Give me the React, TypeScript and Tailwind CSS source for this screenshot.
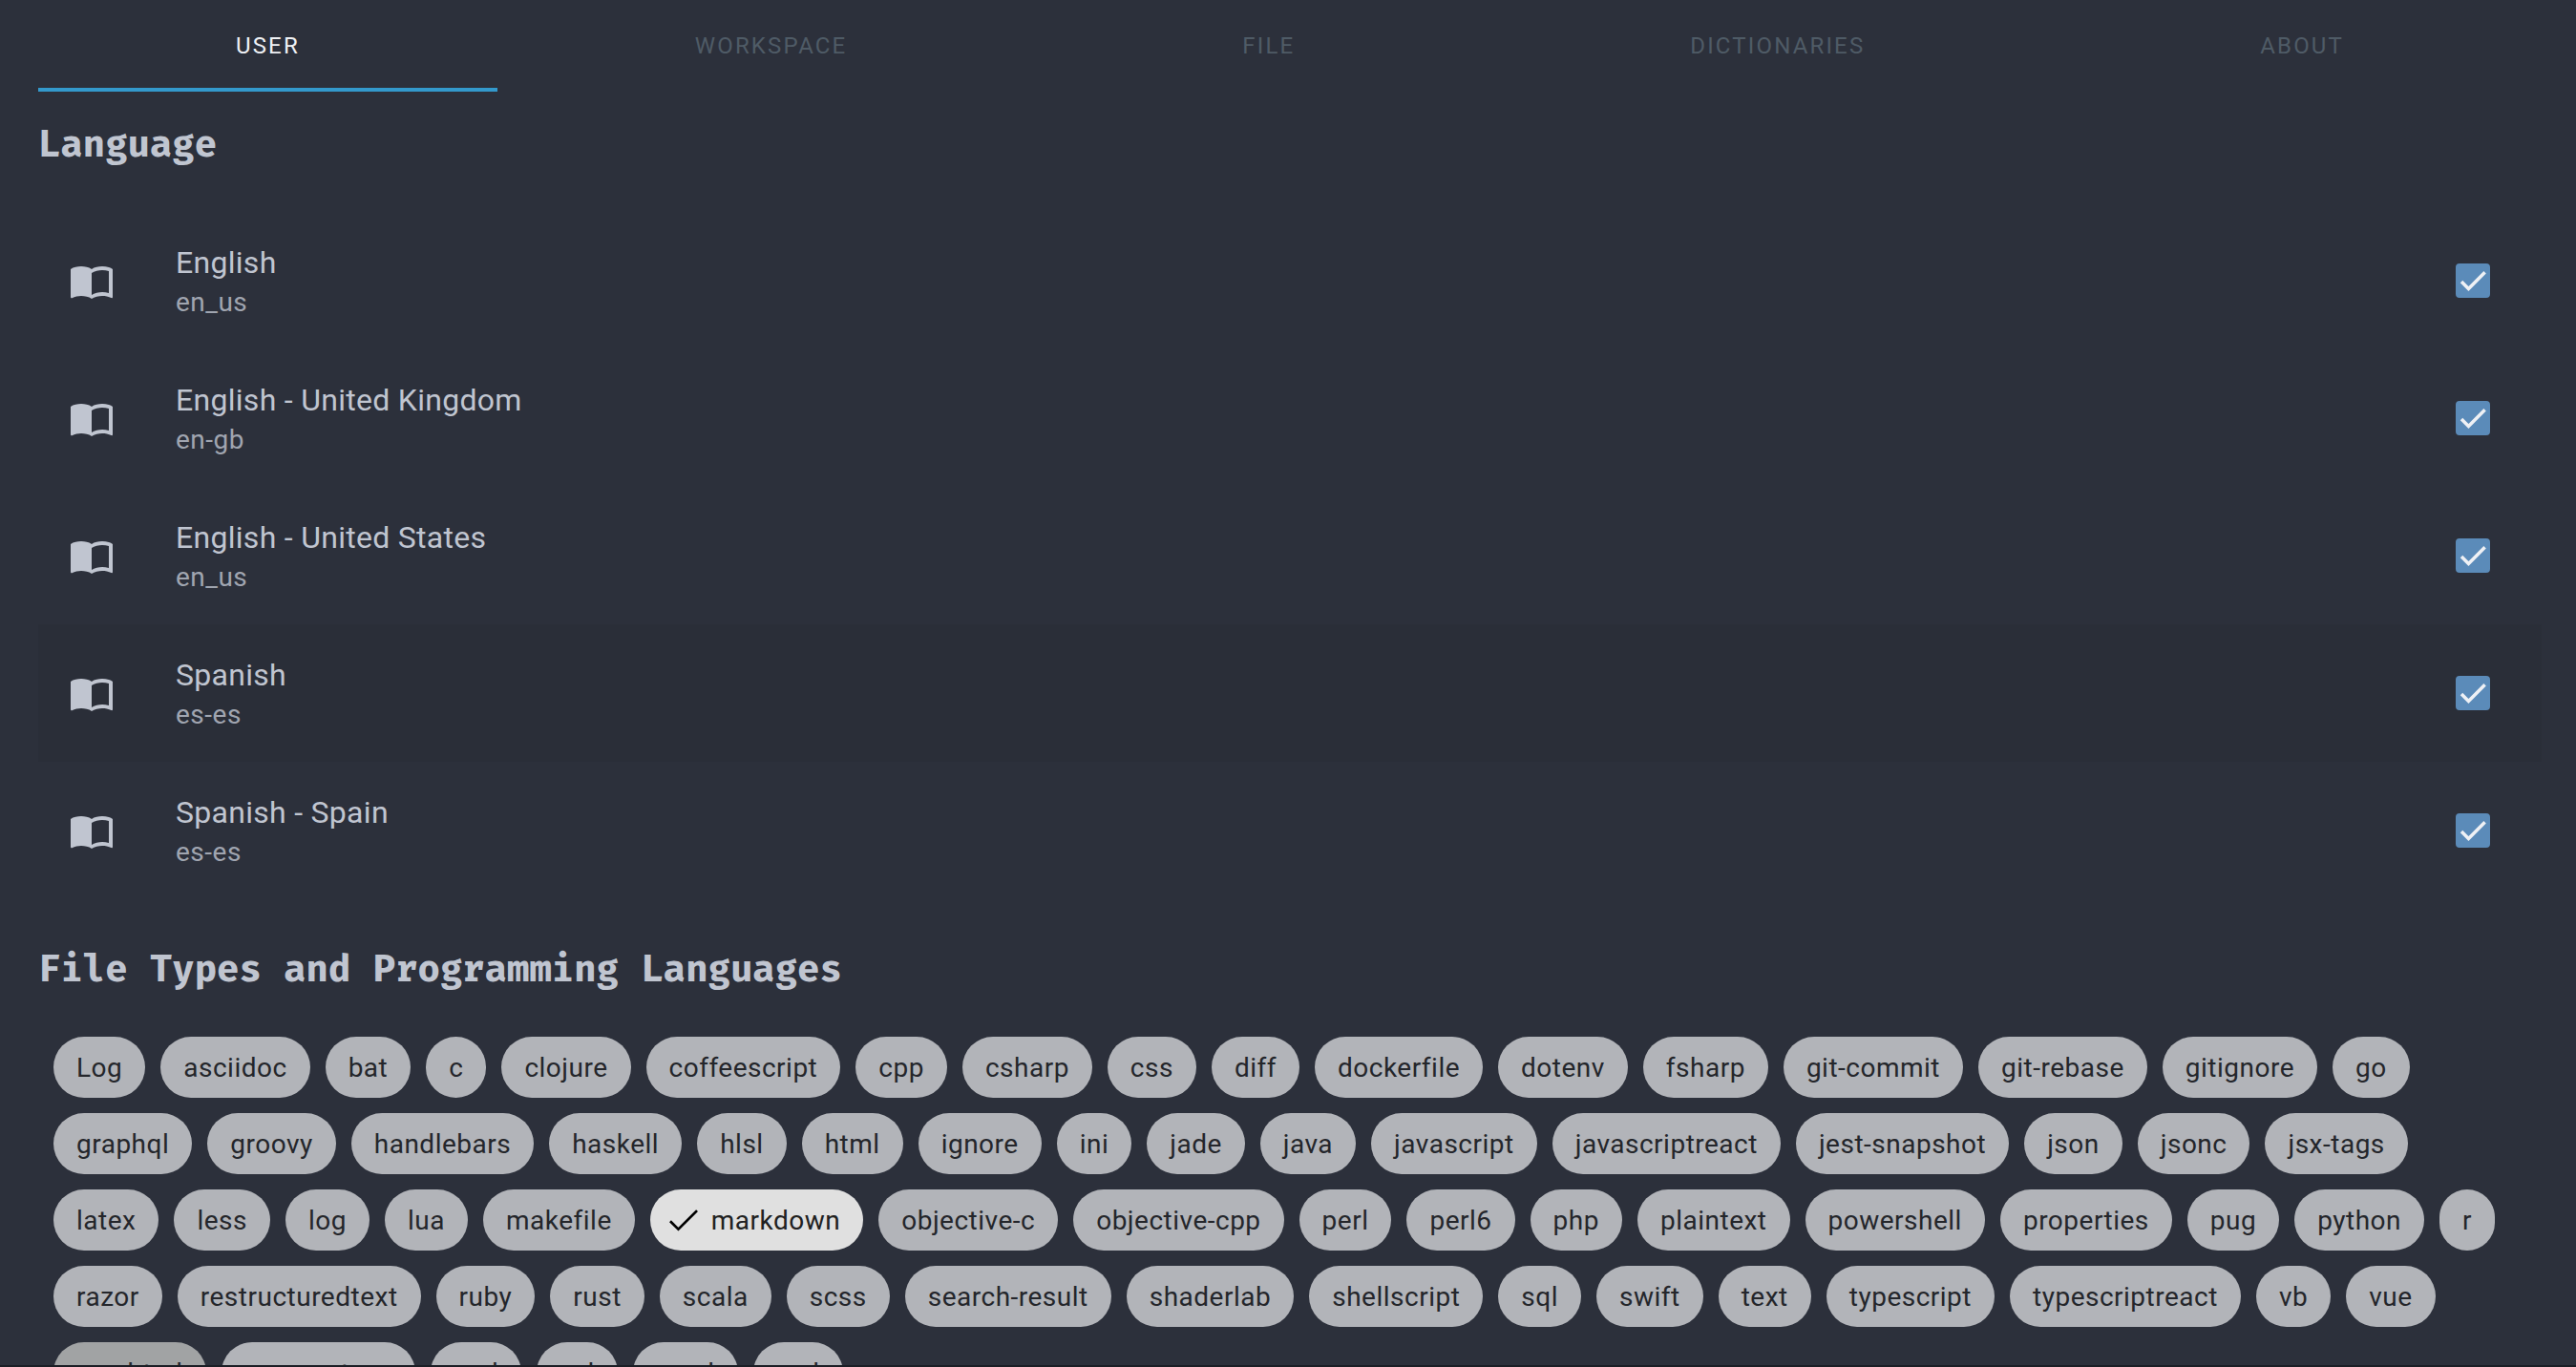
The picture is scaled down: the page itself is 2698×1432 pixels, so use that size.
import { useState } from "react";

const tabs = ["User", "Workspace", "File", "Dictionaries", "About"];

const languages = [
  { name: "English", code: "en_us" },
  { name: "English - United Kingdom", code: "en-gb" },
  { name: "English - United States", code: "en_us" },
  { name: "Spanish", code: "es-es" },
  { name: "Spanish - Spain", code: "es-es" },
];

const fileTypes = [
  "Log", "asciidoc", "bat", "c", "clojure", "coffeescript", "cpp", "csharp", "css", "diff",
  "dockerfile", "dotenv", "fsharp", "git-commit", "git-rebase", "gitignore", "go", "graphql",
  "groovy", "handlebars", "haskell", "hlsl", "html", "ignore", "ini", "jade", "java",
  "javascript", "javascriptreact", "jest-snapshot", "json", "jsonc", "jsx-tags", "latex",
  "less", "log", "lua", "makefile", "markdown", "objective-c", "objective-cpp", "perl",
  "perl6", "php", "plaintext", "powershell", "properties", "pug", "python", "r", "razor",
  "restructuredtext", "ruby", "rust", "scala", "scss", "search-result", "shaderlab",
  "shellscript", "sql", "swift", "text", "typescript", "typescriptreact", "vb", "vue",
  "vue-html", "vue-postcss", "xml", "xsl", "yaml", "yml",
];

function BookIcon() {
  return (
    <svg viewBox="0 0 24 24" className="size-12 shrink-0 fill-current" aria-hidden="true">
      <path d="M21 5c-1.11-.35-2.33-.5-3.5-.5-1.95 0-4.05.4-5.5 1.5-1.45-1.1-3.55-1.5-5.5-1.5S2.45 4.9 1 6v14.65c0 .25.25.5.5.5.1 0 .15-.05.25-.05C3.1 20.45 5.05 20 6.5 20c1.95 0 4.05.4 5.5 1.5 1.35-.85 3.8-1.5 5.5-1.5 1.65 0 3.35.3 4.75 1.05.1.05.15.05.25.05.25 0 .5-.25.5-.5V6c-.6-.45-1.25-.75-2-1zm0 13.5c-1.1-.35-2.3-.5-3.5-.5-1.7 0-4.15.65-5.5 1.5V8c1.35-.85 3.8-1.5 5.5-1.5 1.2 0 2.4.15 3.5.5v11.5z" />
    </svg>
  );
}

function Heading({ children }: { children: string }) {
  return (
    <h2 className="font-['Fira_Code','Fira_Mono','DejaVu_Sans_Mono',monospace] text-[38px] leading-[50px] font-extrabold">
      {children}
    </h2>
  );
}

export default function App() {
  const [tab, setTab] = useState("User");
  const [enabled, setEnabled] = useState(languages.map(() => true));
  const [selected, setSelected] = useState(["markdown"]);

  return (
    <div className="h-screen border-b-2 border-[#1b1e25] bg-[#2c303b] font-[Roboto,sans-serif] text-[#c0c5d0]">
      <div className="h-full overflow-y-auto pr-9 pl-10 [scrollbar-width:none]">
        <nav role="tablist" className="flex">
          {tabs.map((name) => (
            <button
              key={name}
              role="tab"
              aria-selected={tab === name}
              onClick={() => setTab(name)}
              className={`h-24 flex-auto border-b-4 px-12 pt-1 text-2xl tracking-[0.09em] uppercase ${
                tab === name ? "border-[#3399cc] text-[#eff1f5]" : "border-transparent text-[#4f5b66]"
              }`}
            >
              {name}
            </button>
          ))}
        </nav>

        <section className="pt-8">
          <Heading>Language</Heading>
          <ul className="pt-11 pb-[18px]">
            {languages.map((lang, i) => (
              <li key={lang.name}>
                <label
                  className={`flex h-36 items-center pr-[54px] pl-8 ${lang.name === "Spanish" ? "bg-[#2a2e38]" : ""}`}
                >
                  <BookIcon />
                  <span className="ml-16 flex flex-1 flex-col pt-1">
                    <span className="text-[32px] leading-[42px] tracking-[0.009em]">{lang.name}</span>
                    <span className="text-[28px] leading-[42px] tracking-[0.0178em] text-[#a0a5b0]">{lang.code}</span>
                  </span>
                  <span className="grid size-9 place-items-center">
                    <input
                      type="checkbox"
                      checked={enabled[i]}
                      onChange={() => setEnabled(enabled.map((on, j) => (j === i ? !on : on)))}
                      className="peer col-start-1 row-start-1 size-9 appearance-none rounded-sm border-4 border-[#5b8bb9] checked:bg-[#5b8bb9]"
                    />
                    <svg
                      viewBox="0 0 24 24"
                      className="pointer-events-none invisible col-start-1 row-start-1 size-7 fill-none stroke-[#eff1f5] stroke-3 peer-checked:visible"
                      aria-hidden="true"
                    >
                      <path d="M1.73 12.91 8.1 19.28 22.79 4.59" />
                    </svg>
                  </span>
                </label>
              </li>
            ))}
          </ul>
        </section>

        <section className="pt-8">
          <Heading>File Types and Programming Languages</Heading>
          <div className="flex flex-wrap gap-4 px-4 pt-11 pb-4">
            {fileTypes.map((type) => {
              const on = selected.includes(type);
              return (
                <button
                  key={type}
                  aria-pressed={on}
                  onClick={() => setSelected(on ? selected.filter((t) => t !== type) : [...selected, type])}
                  className={`flex h-16 items-center rounded-full text-[28px] tracking-[0.0178em] ${
                    on
                      ? "bg-[#e0e0e0] pr-6 pl-4 text-[#212121]"
                      : type === "vue-html"
                        ? "bg-[#a1a3a4] px-6 text-[#24262b]"
                        : "bg-[#b2b4b9] px-6 text-[#24262b]"
                  }`}
                >
                  {on && (
                    <svg viewBox="-2 -3 30 30" className="mr-2 size-10 fill-none stroke-black stroke-2" aria-hidden="true">
                      <path d="M1.73 12.91 8.1 19.28 22.79 4.59" />
                    </svg>
                  )}
                  <span className="pt-0.5">{type}</span>
                </button>
              );
            })}
          </div>
        </section>
      </div>
    </div>
  );
}
